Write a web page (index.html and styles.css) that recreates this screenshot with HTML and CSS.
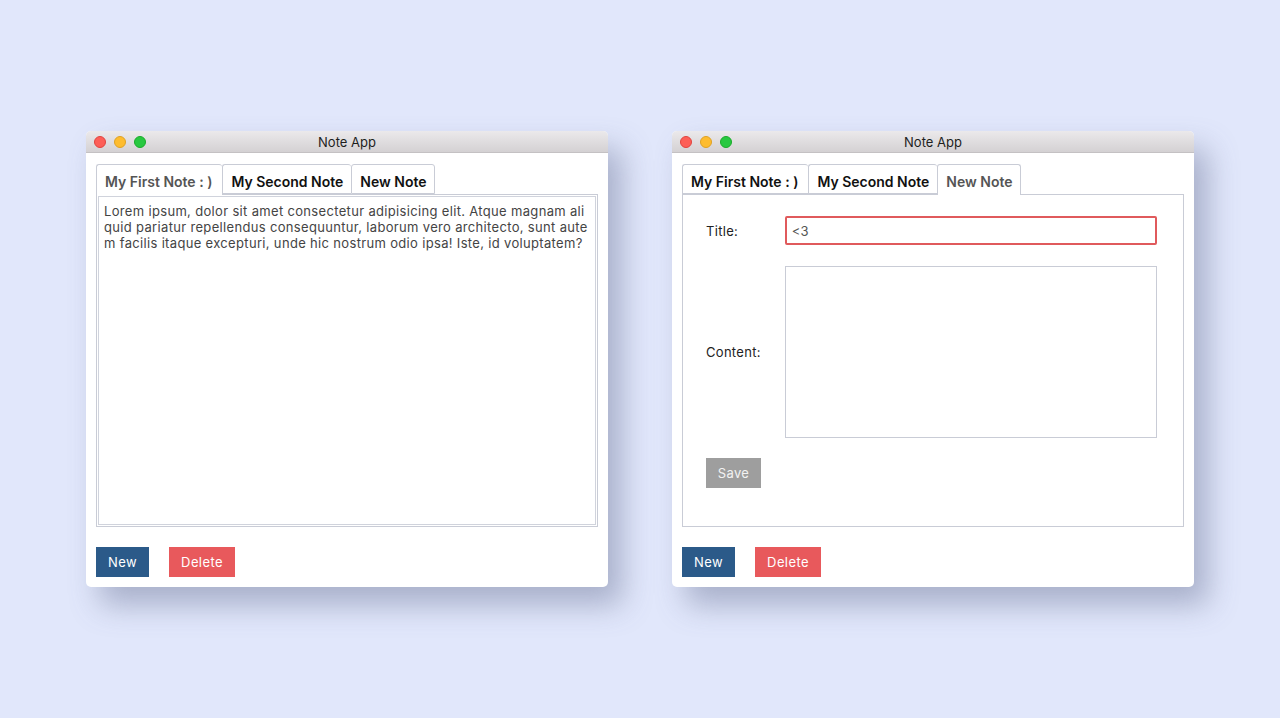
FILE: index.html
```html
<!DOCTYPE html>
<html>
<head>
<meta charset="utf-8">
<link rel="stylesheet" href="styles.css">
</head>
<body>
<div class="stage">
  <div class="window">
    <div class="titlebar">
      <div class="lights"><span class="light red"></span><span class="light yellow"></span><span class="light green"></span></div>
      <div class="title">Note App</div>
    </div>
    <div class="body">
      <div class="tabs">
        <div class="tab active">My First Note : )</div>
        <div class="tab">My Second Note</div>
        <div class="tab">New Note</div>
      </div>
      <div class="panel">
        <div class="note-text">Lorem ipsum, dolor sit amet consectetur adipisicing elit. Atque magnam aliquid pariatur repellendus consequuntur, laborum vero architecto, sunt autem facilis itaque excepturi, unde hic nostrum odio ipsa! Iste, id voluptatem?</div>
      </div>
      <div class="actions">
        <button class="btn btn-new">New</button>
        <button class="btn btn-delete">Delete</button>
      </div>
    </div>
  </div>

  <div class="window">
    <div class="titlebar">
      <div class="lights"><span class="light red"></span><span class="light yellow"></span><span class="light green"></span></div>
      <div class="title">Note App</div>
    </div>
    <div class="body">
      <div class="tabs">
        <div class="tab">My First Note : )</div>
        <div class="tab">My Second Note</div>
        <div class="tab active">New Note</div>
      </div>
      <div class="panel form-panel">
        <div class="row">
          <label class="label">Title:</label>
          <div class="input">&lt;3</div>
        </div>
        <div class="row content-row">
          <label class="label">Content:</label>
          <div class="textarea"></div>
        </div>
        <button class="btn btn-save">Save</button>
      </div>
      <div class="actions">
        <button class="btn btn-new">New</button>
        <button class="btn btn-delete">Delete</button>
      </div>
    </div>
  </div>
</div>
</body>
</html>
```

FILE: styles.css
```css
html, body {
  margin: 0;
  padding: 0;
}
body {
  background: #e1e7fb;
  font-family: Inter, "Noto Sans", "Liberation Sans", sans-serif;
  width: 1280px;
  height: 718px;
  overflow: hidden;
}
.stage {
  display: flex;
  gap: 64px;
  padding: 131px 0 0 86px;
}
.window {
  width: 522px;
  height: 456px;
  background: #fff;
  border-radius: 5px;
  overflow: hidden;
  box-shadow: 14px 18px 30px rgba(90, 100, 135, 0.42);
  display: flex;
  flex-direction: column;
}
.titlebar {
  height: 22px;
  flex: none;
  position: relative;
  background: linear-gradient(#ebe9eb, #d4d1d3);
  border-bottom: 1px solid #c4c1c3;
  box-sizing: border-box;
  display: flex;
  align-items: center;
  justify-content: center;
}
.lights {
  position: absolute;
  left: 8px;
  top: 5px;
  display: flex;
  gap: 8px;
}
.light {
  width: 12px;
  height: 12px;
  border-radius: 50%;
  box-sizing: border-box;
}
.red { background: #fd5f57; border: 1px solid #e0443e; }
.yellow { background: #febc2e; border: 1px solid #dea123; }
.green { background: #28c840; border: 1px solid #1aab29; }
.title {
  font-size: 13px;
  color: #1e1e1e;
  padding-top: 1px;
}
.body {
  padding: 11px 10px 0 10px;
  display: flex;
  flex-direction: column;
}
.tabs {
  display: flex;
  height: 30px;
}
.tab {
  box-sizing: border-box;
  height: 31px;
  padding: 8px 8px 0 8px;
  border: 1px solid #c9ccd6;
  border-bottom: none;
  border-right: none;
  border-radius: 3px 3px 0 0;
  font-size: 14px;
  font-weight: 600;
  color: #111;
  background: #fff;
  white-space: nowrap;
  position: relative;
  z-index: 0;
}
.tab:first-child {
  padding-right: 10px;
}
.tab:last-child {
  padding-right: 7px;
  border-right: 1px solid #c9ccd6;
}
.tab.active {
  color: #555;
  z-index: 2;
}
.tabs .tab:not(.active) {
  height: 30px;
  border-bottom: 1px solid #c9ccd6;
}
.panel {
  box-sizing: border-box;
  height: 333px;
  border: 1px solid #c9ccd6;
  position: relative;
  z-index: 1;
  padding: 1px;
}
.note-text {
  box-sizing: border-box;
  height: 100%;
  border: 1px solid #d0d3dc;
  padding: 6px 5px;
  font-size: 13px;
  line-height: 16px;
  letter-spacing: 0.33px;
  color: #444;
  word-break: break-all;
}
.form-panel {
  padding: 21px 26px 0 23px;
}
.row {
  display: flex;
  align-items: center;
}
.label {
  width: 79px;
  font-size: 13px;
  color: #222;
  letter-spacing: 0.3px;
}
.input {
  box-sizing: border-box;
  width: 373px;
  height: 29px;
  border: 2px solid #e05a5c;
  border-radius: 2px;
  padding: 5px 0 0 5px;
  font-size: 13px;
  color: #555;
}
.content-row {
  margin-top: 21px;
}
.textarea {
  box-sizing: border-box;
  width: 372px;
  height: 172px;
  border: 1px solid #c9ccd6;
}
.btn {
  border: none;
  font-family: Inter, "Noto Sans", sans-serif;
  font-size: 13px;
  color: #fff;
  height: 30px;
  padding: 0;
  letter-spacing: 0.4px;
  cursor: pointer;
}
.btn-save {
  margin-top: 20px;
  width: 55px;
  background: #9e9e9e;
  color: #f2f2f2;
  display: block;
}
.actions {
  display: flex;
  gap: 20px;
  margin-top: 20px;
}
.btn-new {
  width: 53px;
  background: #2b5a89;
}
.btn-delete {
  width: 66px;
  background: #e8595c;
}
```
